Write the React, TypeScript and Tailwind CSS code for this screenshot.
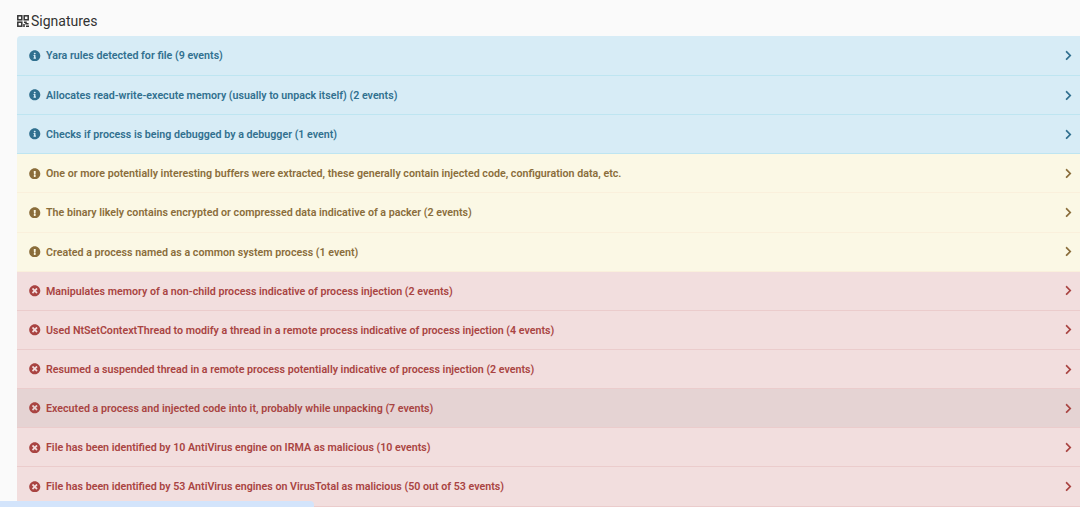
import React from "react";
import { FaInfoCircle, FaExclamationCircle, FaTimesCircle, FaChevronRight } from "react-icons/fa";

type Level = "info" | "warn" | "danger";

const signatures: { level: Level; text: string; hover?: boolean }[] = [
  { level: "info", text: "Yara rules detected for file (9 events)" },
  { level: "info", text: "Allocates read-write-execute memory (usually to unpack itself) (2 events)" },
  { level: "info", text: "Checks if process is being debugged by a debugger (1 event)" },
  { level: "warn", text: "One or more potentially interesting buffers were extracted, these generally contain injected code, configuration data, etc." },
  { level: "warn", text: "The binary likely contains encrypted or compressed data indicative of a packer (2 events)" },
  { level: "warn", text: "Created a process named as a common system process (1 event)" },
  { level: "danger", text: "Manipulates memory of a non-child process indicative of process injection (2 events)" },
  { level: "danger", text: "Used NtSetContextThread to modify a thread in a remote process indicative of process injection (4 events)" },
  { level: "danger", text: "Resumed a suspended thread in a remote process potentially indicative of process injection (2 events)" },
  { level: "danger", text: "Executed a process and injected code into it, probably while unpacking (7 events)", hover: true },
  { level: "danger", text: "File has been identified by 10 AntiVirus engine on IRMA as malicious (10 events)" },
  { level: "danger", text: "File has been identified by 53 AntiVirus engines on VirusTotal as malicious (50 out of 53 events)" },
];

function rowClass(level: Level, hover?: boolean) {
  if (hover) return "bg-[#e5d3d3] border-[#ebcccc] text-[#a94442]";
  if (level === "info") return "bg-[#d7ecf6] border-[#bee5f1] text-[#31708f]";
  if (level === "warn") return "bg-[#fbf8e5] border-[#faf0dc] text-[#8a6d3b]";
  return "bg-[#f2dede] border-[#ebcccc] text-[#a94442]";
}

function LevelIcon({ level }: { level: Level }) {
  if (level === "info") return <FaInfoCircle className="w-[11.5px] h-[11.5px] shrink-0" />;
  if (level === "warn") return <FaExclamationCircle className="w-[11.5px] h-[11.5px] shrink-0" />;
  return <FaTimesCircle className="w-[11.5px] h-[11.5px] shrink-0" />;
}

// qr style glyph next to the heading
function QrGlyph() {
  return (
    <svg viewBox="0 0 12 12" className="w-[12px] h-[12px] shrink-0" fill="none" stroke="#333" strokeWidth="1.5">
      <rect x="0.8" y="0.8" width="4" height="4" />
      <rect x="7.2" y="0.8" width="4" height="4" />
      <rect x="0.8" y="7.2" width="4" height="4" />
      <path d="M7 7.2h2v1.6h2.6M7 9v3M9 11.2h3" />
    </svg>
  );
}

export default function App() {
  return (
    <div className="relative h-[507px] w-[1080px] overflow-hidden bg-[#fafafa] font-['Roboto',sans-serif]">
      <div className="flex h-[36px] items-center gap-[2px] pl-[17px] pt-[5px] text-[#333]">
        <QrGlyph />
        <h3 className="text-[14px] leading-none font-normal">Signatures</h3>
      </div>

      {/* Signature rows */}
      <div className="ml-[17px] flex flex-col">
        {signatures.map((s, i) => (
          <div
            key={i}
            className={`flex shrink-0 items-center justify-between border-b pl-[12px] pr-[6px] ${rowClass(s.level, s.hover)} ${i === 0 ? "h-[40px] rounded-tl-[4px]" : "h-[39.15px]"}`}
          >
            <div className="flex items-center gap-[5.5px] text-[10.68px] font-semibold">
              <LevelIcon level={s.level} />
              <span className="pt-[2px]">{s.text}</span>
            </div>
            <FaChevronRight className="w-[11px] h-[11px]" />
          </div>
        ))}
      </div>

      {/* Bottom scrollbar overlay */}
      <div className="absolute bottom-0 left-0 h-[6px] w-[314px] rounded-tr-[4px] bg-[#d3e4fb]" />
    </div>
  );
}
